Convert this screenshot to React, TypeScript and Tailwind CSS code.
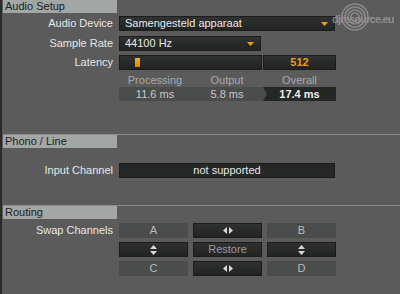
import React from "react";

const font = { fontFamily: '"Liberation Sans", Arial, sans-serif' };

function Header({ title }: { title: string }) {
  return (
    <div className="h-[13px] w-[114px] bg-[#a2a7a6] pl-[2px] text-[11px] leading-[13px] text-[#1e1e1e]">
      {title}
    </div>
  );
}

function Label({ children }: { children: React.ReactNode }) {
  return (
    <div className="w-[110px] shrink-0 text-right text-[11px] leading-[15px] text-[#e6e6e6]">{children}</div>
  );
}

function DownArrow() {
  return (
    <svg width="7" height="4" viewBox="0 0 7 4" className="block">
      <polygon points="0,0 7,0 3.5,4" fill="#f0a000" />
    </svg>
  );
}

const dark = "bg-gradient-to-b from-[#303131] to-[#222323] border border-[#1c1c1c]";
const flat = "bg-[#4b4c4c]";

function HArrows() {
  return (
    <svg width="10" height="7" viewBox="0 0 10 7" className="block">
      <polygon points="0,3.5 4,0 4,7" fill="#d8d8d8" />
      <polygon points="10,3.5 6,0 6,7" fill="#d8d8d8" />
    </svg>
  );
}

function VArrows() {
  return (
    <svg width="7" height="10" viewBox="0 0 7 10" className="block">
      <polygon points="3.5,0 0,4 7,4" fill="#d8d8d8" />
      <polygon points="3.5,10 0,6 7,6" fill="#d8d8d8" />
    </svg>
  );
}

function Cell({ kind, children }: { kind: "dark" | "flat"; children: React.ReactNode }) {
  return (
    <div
      className={`flex h-[15px] w-[69px] items-center justify-center text-[11px] ${
        kind === "dark" ? dark + " text-[#9a9a9a]" : flat + " text-[#bdbdbd]"
      }`}
    >
      {children}
    </div>
  );
}

export default function App() {
  return (
    <div
      className="relative flex h-[294px] w-[400px] overflow-hidden border-l-2 border-[#2a2a2a] bg-[#5b5b5b]"
      style={font}
    >
      <div className="flex w-full flex-col pl-[1px]">
        {/* Audio Setup */}
        <Header title="Audio Setup" />
        <div className="mt-[3px] flex items-center gap-[6px]">
          <Label>Audio Device</Label>
          <div className={`flex h-[15px] w-[216px] items-center justify-between pl-[5px] pr-[6px] ${dark}`}>
            <span className="text-[11px] text-[#e8e8e8]">Samengesteld apparaat</span>
            <DownArrow />
          </div>
        </div>
        <div className="mt-[5px] flex items-center gap-[6px]">
          <Label>Sample Rate</Label>
          <div className={`flex h-[15px] w-[142px] items-center justify-between pl-[5px] pr-[6px] ${dark}`}>
            <span className="text-[11px] text-[#e8e8e8]">44100 Hz</span>
            <DownArrow />
          </div>
        </div>
        <div className="mt-[4px] flex items-center gap-[6px]">
          <Label>Latency</Label>
          <div className={`flex h-[15px] w-[143px] items-center pl-[15px] ${dark}`}>
            <div className="h-[9px] w-[5px] bg-gradient-to-b from-[#f5b020] to-[#d88800]" />
          </div>
          <div className={`-ml-[5px] flex h-[15px] w-[73px] items-center justify-center text-[11px] font-bold text-[#e8a010] ${dark}`}>
            512
          </div>
        </div>
        <div className="mt-[3px] flex h-[14px] items-center pl-[116px] text-[11px] text-[#a9a9a9]">
          <div className="w-[72px] text-center">Processing</div>
          <div className="w-[72px] text-center">Output</div>
          <div className="w-[73px] text-center">Overall</div>
        </div>
        <div className="flex h-[14px] items-center pl-[116px] text-[11px]">
          <div className="flex h-[14px] w-[144px] items-center bg-[#4b4c4c] text-[#c8c8c8]">
            <div className="w-[72px] text-center">11.6 ms</div>
            <div className="w-[72px] text-center">5.8 ms</div>
          </div>
          <div className="relative flex h-[14px] w-[73px] items-center justify-center bg-[#252626] font-bold text-[#ececec]">
            <div className="absolute left-0 top-0 h-0 w-0 border-y-[7px] border-l-[4px] border-y-transparent border-l-[#4b4c4c]" />
            17.4 ms
          </div>
        </div>

        {/* Phono / Line */}
        <div className="mt-[33px] h-[1px] w-full bg-[#8c8c8c]" />
        <Header title="Phono / Line" />
        <div className="mt-[15px] flex items-center gap-[6px]">
          <Label>Input Channel</Label>
          <div className="flex h-[15px] w-[216px] items-center justify-center border border-[#1c1c1c] bg-[#262727] text-[11px] text-[#e6e6e6]">
            not supported
          </div>
        </div>

        {/* Routing */}
        <div className="mt-[27px] h-[1px] w-full bg-[#8c8c8c]" />
        <Header title="Routing" />
        <div className="mt-[4px] flex items-start gap-[6px]">
          <Label>Swap Channels</Label>
          <div className="grid grid-cols-[69px_69px_69px] gap-x-[5px] gap-y-[4px]">
            <Cell kind="flat">A</Cell>
            <Cell kind="dark"><HArrows /></Cell>
            <Cell kind="flat">B</Cell>
            <Cell kind="dark"><VArrows /></Cell>
            <Cell kind="dark">Restore</Cell>
            <Cell kind="dark"><VArrows /></Cell>
            <Cell kind="flat">C</Cell>
            <Cell kind="dark"><HArrows /></Cell>
            <Cell kind="flat">D</Cell>
          </div>
        </div>
      </div>

      {/* watermark */}
      <div className="absolute left-[329px] top-[3px] h-[30px] w-[70px] opacity-60">
        <svg width="70" height="30" viewBox="0 0 70 30" className="absolute left-0 top-0">
          {[13, 10, 7, 4].map((r) => (
            <circle key={r} cx="24" cy="14" r={r} fill="none" stroke="#a8a8a8" strokeWidth="1.6" />
          ))}
        </svg>
        <div className="absolute left-[1px] top-[8px] whitespace-nowrap text-[11px] font-bold tracking-[-0.8px] text-[#b4b4b4]">
          djresource.eu
        </div>
      </div>
    </div>
  );
}
